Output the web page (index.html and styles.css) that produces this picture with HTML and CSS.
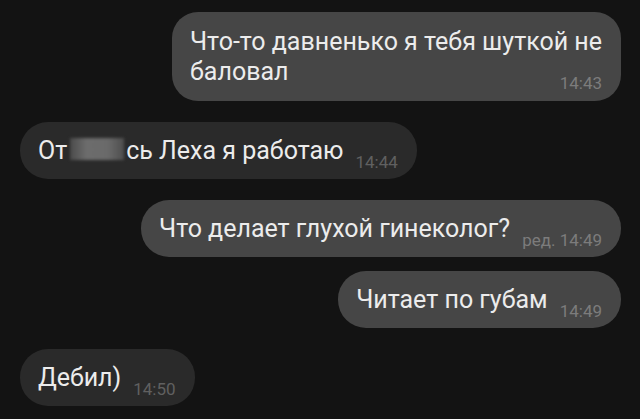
FILE: index.html
```html
<!DOCTYPE html>
<html lang="ru">
<head>
<meta charset="utf-8">
<link rel="stylesheet" href="styles.css">
</head>
<body>
<div class="chat">
  <div class="row row--out">
    <div class="bubble bubble--out bubble--wrap">
      <div class="text">Что-то давненько я тебя шуткой не</div>
      <div class="last-line">
        <div class="text">баловал</div>
        <div class="time">14:43</div>
      </div>
    </div>
  </div>
  <div class="row row--in">
    <div class="bubble bubble--in">
      <div class="text">От<span class="censor"></span>сь Леха я работаю</div>
      <div class="time">14:44</div>
    </div>
  </div>
  <div class="row row--out">
    <div class="bubble bubble--out">
      <div class="text">Что делает глухой гинеколог?</div>
      <div class="time">ред. 14:49</div>
    </div>
  </div>
  <div class="row row--out row--same">
    <div class="bubble bubble--out">
      <div class="text">Читает по губам</div>
      <div class="time">14:49</div>
    </div>
  </div>
  <div class="row row--in">
    <div class="bubble bubble--in">
      <div class="text">Дебил)</div>
      <div class="time">14:50</div>
    </div>
  </div>
</div>
</body>
</html>
```

FILE: styles.css
```css
html, body {
  margin: 0;
  padding: 0;
  background: #131313;
}
body {
  font-family: Roboto, "Noto Sans", "Liberation Sans", sans-serif;
  color: #ececec;
  width: 640px;
  height: 419px;
  overflow: hidden;
}
.chat {
  display: flex;
  flex-direction: column;
  padding: 12px 19px 0 20px;
}
.row {
  display: flex;
  margin-top: 21px;
}
.row:first-child { margin-top: 0; }
.row--same { margin-top: 14px; }
.row--out { justify-content: flex-end; }
.row--in { justify-content: flex-start; }

.bubble {
  display: flex;
  align-items: flex-end;
  gap: 12px;
  padding: 14px 19px 8px 18px;
  border-radius: 28px;
}
.bubble--out { background: #464646; }
.bubble--in { background: #2a2a2a; }

.text {
  font-size: 25px;
  line-height: 30px;
  margin-bottom: 5px;
  white-space: nowrap;
}
.time {
  font-size: 17px;
  line-height: 18px;
  color: #7c7c7c;
  white-space: nowrap;
}
.bubble--in .time { color: #606060; }

.bubble--wrap {
  display: flex;
  flex-direction: column;
  align-items: stretch;
  gap: 0;
  padding: 15px 19px 9px 18px;
  border-radius: 26px;
}
.bubble--wrap > .text {
  margin-bottom: 0;
}
.last-line {
  display: flex;
  justify-content: space-between;
  align-items: flex-end;
  gap: 12px;
}

.censor {
  display: inline-block;
  width: 54px;
  height: 22px;
  margin: 0 2px 0 3px;
  vertical-align: -1px;
  background: linear-gradient(90deg, #4a4a4a, #6c6c6c 30%, #6a6a6a 70%, #4e4e4e);
  filter: blur(1.5px);
}
```
